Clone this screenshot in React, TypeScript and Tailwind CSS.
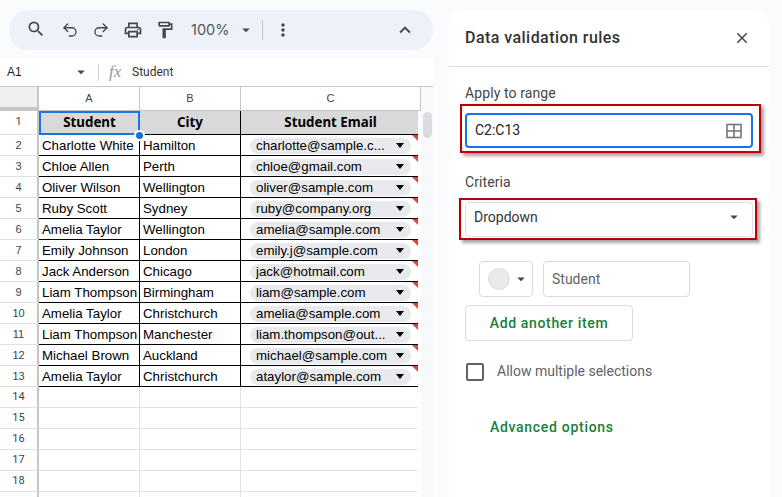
import React from "react";
import { MdSearch, MdOutlinePrint, MdOutlineFormatPaint, MdMoreVert, MdExpandLess, MdClose, MdArrowDropDown } from "react-icons/md";
import { Undo2, Redo2 } from "lucide-react";

const rows: [string, string, string][] = [
  ["Charlotte White", "Hamilton", "charlotte@sample.c..."],
  ["Chloe Allen", "Perth", "chloe@gmail.com"],
  ["Oliver Wilson", "Wellington", "oliver@sample.com"],
  ["Ruby Scott", "Sydney", "ruby@company.org"],
  ["Amelia Taylor", "Wellington", "amelia@sample.com"],
  ["Emily Johnson", "London", "emily.j@sample.com"],
  ["Jack Anderson", "Chicago", "jack@hotmail.com"],
  ["Liam Thompson", "Birmingham", "liam@sample.com"],
  ["Amelia Taylor", "Christchurch", "amelia@sample.com"],
  ["Liam Thompson", "Manchester", "liam.thompson@out..."],
  ["Michael Brown", "Auckland", "michael@sample.com"],
  ["Amelia Taylor", "Christchurch", "ataylor@sample.com"],
];

function RowNum({ n }: { n?: number }) {
  return (
    <div className="w-[39px] shrink-0 flex items-center justify-center text-[11px] text-[#444] border-r-2 border-r-[#c4c7c5] border-b border-b-[#e1e1e1]">
      {n}
    </div>
  );
}

export default function App() {
  return (
    <div className="w-[782px] h-[497px] overflow-hidden bg-[#f9fbfd] flex font-['Roboto',sans-serif]">
      <div className="w-[433px] shrink-0 flex flex-col">
        <div className="ml-[9px] mt-[10px] h-[40px] rounded-[20px] bg-[#edf2fa] flex items-center text-[#444746]">
          <MdSearch className="ml-[17px] text-[20px] -mt-[3px]" />
          <Undo2 className="ml-[15px] w-[18px] h-[18px]" strokeWidth={1.75} />
          <Redo2 className="ml-[13px] w-[18px] h-[18px]" strokeWidth={1.75} />
          <MdOutlinePrint className="ml-[13px] text-[20px]" />
          <MdOutlineFormatPaint className="ml-[12px] text-[20px] -mt-[1px]" />
          <span className="ml-[16px] text-[14.5px] text-[#555] font-['Inter',sans-serif] w-[38px]">100%</span>
          <MdArrowDropDown className="ml-[8px] text-[18px]" />
          <div className="ml-[7px] w-px h-[20px] bg-[#c7c7c7]" />
          <MdMoreVert className="ml-[10px] text-[20px]" />
          <MdExpandLess className="ml-auto mr-[17px] text-[22px]" />
        </div>

        <div className="mt-[8px] bg-white flex-1 flex flex-col min-h-0 overflow-hidden">
          <div className="h-[29px] shrink-0 flex items-center border-b border-[#c4c7c5] text-[12px] text-[#222] font-['Liberation_Sans',sans-serif]">
            <span className="ml-[7px] w-[65px]">A1</span>
            <MdArrowDropDown className="text-[#444] text-[18px]" />
            <div className="ml-[8px] w-px h-[17px] bg-[#d0d0d0]" />
            <span className="ml-[10px] w-[23px] font-['Liberation_Serif',serif] italic text-[17px] text-[#999]">fx</span>
            <span className="text-[#333] font-['Roboto',sans-serif]">Student</span>
          </div>

          <div className="flex h-[24px] shrink-0 text-[11px] text-[#444] font-['Liberation_Sans',sans-serif]">
            <div className="w-[39px] shrink-0 bg-[#f0f0f0] border-r-2 border-r-[#c4c7c5] border-b-4 border-b-[#c4c7c5] border-t-0" />
            {(["w-[101px]", "w-[101px]", "w-[180px]"] as const).map((w, i) => (
              <div key={i} className={`${w} shrink-0 flex items-center justify-center border-r border-[#c4c7c5] border-b border-b-[#c4c7c5]`}>
                {"ABC"[i]}
              </div>
            ))}
            <div className="flex-1 bg-[#f8f9fa]" />
          </div>

          <div className="flex flex-1 min-h-0">
            <div className="w-[421px] shrink-0 flex flex-col overflow-hidden border-r-[3px] border-r-transparent">
              <div className="flex h-[24px] shrink-0 relative">
                <RowNum n={1} />
                <div className="w-[101px] shrink-0 bg-[#d9d9d9] border-2 border-[#1a73e8] flex items-center justify-center font-['Noto_Sans',sans-serif] font-bold text-[13.3px] text-black">Student</div>
                <div className="w-[101px] shrink-0 bg-[#d9d9d9] border-r border-r-black border-b border-b-black pt-[1px] flex items-center justify-center font-['Noto_Sans',sans-serif] font-bold text-[13.3px] text-black">City</div>
                <div className="w-[180px] shrink-0 bg-[#d9d9d9] border-r border-r-black border-b border-b-black pt-[1px] flex items-center justify-center font-['Noto_Sans',sans-serif] font-bold text-[13.3px] text-black">Student Email</div>
                <div className="absolute left-[134px] top-[19px] w-[11px] h-[11px] rounded-full bg-[#1a6fd0] border-2 border-white z-10" />
              </div>
              {rows.map((r, i) => (
                <div key={i} className="flex h-[21px] shrink-0 font-['Liberation_Sans',sans-serif] text-[13.3px] text-black">
                  <RowNum n={i + 2} />
                  <div className="w-[101px] shrink-0 border-r border-r-black border-b border-b-black pl-[3px] pt-[1px] flex items-center whitespace-nowrap overflow-hidden">{r[0]}</div>
                  <div className="w-[101px] shrink-0 border-r border-r-black border-b border-b-black pl-[3px] pt-[1px] flex items-center whitespace-nowrap overflow-hidden">{r[1]}</div>
                  <div className="w-[180px] shrink-0 relative border-r border-r-black border-b border-b-black pt-[1px] flex items-center">
                    <div className="ml-[9px] w-[161px] h-[16px] rounded-full bg-[#e8eaed] flex items-center pl-[6px] whitespace-nowrap overflow-hidden">
                      <span className="w-[136px] overflow-hidden">{r[2]}</span>
                      <span className="ml-[4px] w-0 h-0 border-x-[4px] border-x-transparent border-t-[5px] border-t-black" />
                    </div>
                    <span className="absolute right-0 top-0 w-0 h-0 border-l-[8px] border-l-transparent border-t-[8px] border-t-[#ea4335]" />
                  </div>
                </div>
              ))}
              {[14, 15, 16, 17, 18, undefined].map((n, i) => (
                <div key={i} className="flex h-[21px] shrink-0">
                  <RowNum n={n} />
                  <div className="w-[101px] shrink-0 border-r border-b border-[#e1e1e1]" />
                  <div className="w-[101px] shrink-0 border-r border-b border-[#e1e1e1]" />
                  <div className="w-[180px] shrink-0 border-r-2 border-b border-[#e1e1e1]" />
                </div>
              ))}
            </div>
            <div className="flex-1 bg-[#f8f9fa] pt-[1px] flex justify-center">
              <div className="w-[9px] h-[26px] rounded-full bg-[#dadce0]" />
            </div>
          </div>
        </div>
      </div>

      <div className="ml-[16px] mt-[10px] w-[320px] bg-white rounded-t-[16px] flex flex-col">
        <div className="h-[57px] shrink-0 border-b border-[#dadce0] flex items-center pl-[16px] pr-[18px]">
          <span className="text-[16px] font-medium text-[#333] tracking-[0.45px]">Data validation rules</span>
          <MdClose className="ml-auto text-[18px] text-[#444746]" />
        </div>

        <div className="mt-[17px] ml-[16px] text-[14px] leading-[18px] text-[#444746] tracking-[0.1px]">Apply to range</div>
        <div className="mt-[2px] ml-[11px] w-[301px] h-[49px] border-[2px] border-[#c00000] shadow-[3px_3px_3px_rgba(0,0,0,0.35)] pl-[3px] pt-[7px]">
          <div className="w-[288px] h-[35px] rounded-[4px] border-2 border-[#1a73e8] flex items-center pl-[8px] pr-[9px] text-[14px] text-[#222]">
            <span>C2:C13</span>
            <svg viewBox="0 0 16 16" className="ml-auto w-[16px] h-[16px]" fill="none" stroke="#777" strokeWidth="1.6">
              <rect x="1" y="1.5" width="14" height="13" />
              <path d="M8 1.5v13M1 8h14" />
            </svg>
          </div>
        </div>

        <div className="mt-[20px] ml-[16px] text-[14px] leading-[18px] text-[#444746] tracking-[0.1px]">Criteria</div>
        <div className="mt-[7px] ml-[10px] w-[298px] h-[42px] border-[2px] border-[#c00000] shadow-[3px_3px_3px_rgba(0,0,0,0.35)] pl-[4px] pt-[2px]">
          <div className="w-[288px] h-[35px] rounded-[4px] border border-[#dadce0] flex items-center pl-[8px] pr-[9px] pb-[5px] text-[14px] text-[#333]">
            <span>Dropdown</span>
            <MdArrowDropDown className="ml-auto text-[18px] text-[#444746]" />
          </div>
        </div>

        <div className="mt-[21px] ml-[30px] flex gap-[10px]">
          <div className="w-[54px] h-[36px] rounded-[4px] border border-[#dadce0] flex items-center pl-[8px]">
            <div className="w-[22px] h-[22px] rounded-full bg-[#e8eaed] border border-[#dadce0]" />
            <MdArrowDropDown className="ml-[2px] text-[18px] text-[#444746]" />
          </div>
          <div className="w-[147px] h-[36px] rounded-[4px] border border-[#dadce0] flex items-center pl-[8px] text-[14px] text-[#5f6368]">Student</div>
        </div>

        <div className="mt-[8px] ml-[16px] w-[168px] h-[36px] rounded-[4px] border border-[#dadce0] flex items-center justify-center text-[14px] font-medium text-[#188038] tracking-[0.65px]">Add another item</div>

        <div className="mt-[20px] ml-[17px] flex items-center gap-[13px]">
          <div className="w-[18px] h-[18px] rounded-[2px] border-2 border-[#5f6368]" />
          <span className="text-[14px] text-[#5f6368]">Allow multiple selections</span>
        </div>

        <div className="mt-[35px] ml-[41px] text-[14px] font-medium text-[#188038] tracking-[0.7px]">Advanced options</div>
      </div>
    </div>
  );
}
